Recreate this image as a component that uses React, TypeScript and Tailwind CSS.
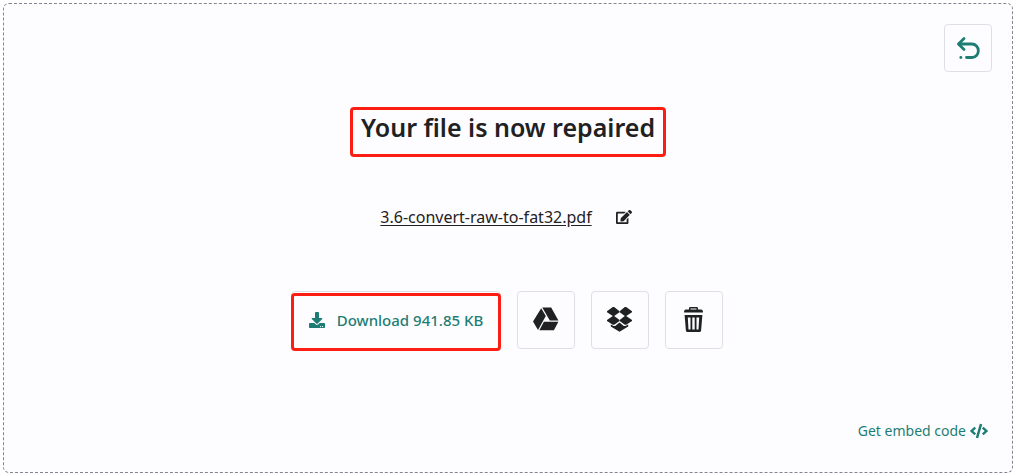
import React from 'react';
import { FaCode, FaDownload, FaEdit } from 'react-icons/fa';

const DriveIcon: React.FC = () => (
  <svg viewBox="0 0 26 26" className="h-[26px] w-[26px]" fill="currentColor" aria-hidden="true">
    <path d="M8.2 1.3 12.8 9 5 23 0 14.6z" />
    <path d="M9.3.6h8.9L25.4 13.4h-8.6z" />
    <path d="M10.9 14.8h14.5l-4.5 8.4H6.4z" />
  </svg>
);

const DropboxIcon: React.FC = () => (
  <svg viewBox="0 0 26 26" className="h-[26px] w-[26px]" fill="currentColor" aria-hidden="true">
    <path d="M5.8 0h1.4l5.3 4.2v1L7.2 9H5.8L0 5.2v-1z" />
    <path d="M17.8 0h1.4L25 4.2v1L19.2 9h-1.4l-5.1-3.8v-1z" />
    <path d="M5.8 9h1.4l5.3 4v1l-5.3 3.7H5.8L0 14v-1z" />
    <path d="M17.8 9h1.4l5.8 4v1l-5.8 3.7h-1.4L12.7 14v-1z" />
    <path d="M3.8 17.4 6.6 19.1 8.2 18.9 12.5 15.4 16.8 18.9 18.4 19.1 21.2 17.4V19.6L12.5 24.8 3.8 19.6z" />
  </svg>
);

const TrashIcon: React.FC = () => (
  <svg viewBox="0 0 20 26" className="h-[26px] w-5" fill="currentColor" aria-hidden="true">
    <path d="M5 2.6V1.2Q5 0 6.2 0h6.6Q14 0 14 1.2v1.4h3Q19 2.6 19 5.4H0Q0 2.6 2 2.6zM6.5 2.6h6V1.5h-6z" fillRule="evenodd" />
    <path d="M.6 8h17.8l-1.3 15.4Q17 25 15.4 25H3.6q-1.6 0-1.7-1.6zM3.8 10.4l.7 12.2h2V10.4zM8.3 10.4v12.2h2.4V10.4zM12.5 10.4v12.2h2l.7-12.2z" fillRule="evenodd" />
  </svg>
);

const UndoIcon: React.FC = () => (
  <svg viewBox="0 0 24 24" className="h-6 w-6" fill="none" stroke="currentColor" strokeWidth="2.8" strokeLinecap="round" strokeLinejoin="round" aria-hidden="true">
    <path d="M8 2.5 2.5 8 8 13.5" />
    <path d="M3 8h13a6.3 6.7 0 0 1 0 13.5H10.5" />
    <path d="M4.8 21.5h.1" />
  </svg>
);

interface FileAction {
  id: string;
  label: string;
  icon: React.ComponentType;
}

const actions: FileAction[] = [
  { id: 'drive', label: 'Save to Google Drive', icon: DriveIcon },
  { id: 'dropbox', label: 'Save to Dropbox', icon: DropboxIcon },
  { id: 'delete', label: 'Delete file', icon: TrashIcon },
];

const App: React.FC = () => {
  return (
    <main className="p-[3px] pr-1 font-['Noto_Sans','Open_Sans',sans-serif] text-[#1f2122]">
      <section className="flex flex-col rounded-md border border-dashed border-[#85858f] bg-[#fdfdff] px-5 pt-5 pb-[31px]">
        <div className="flex justify-end">
          <button type="button" aria-label="Start over" className="flex h-12 w-12 items-center justify-center rounded border border-[#dfdfe6] text-[#1d7d74]">
            <UndoIcon />
          </button>
        </div>

        <div className="mt-[35px] flex flex-col items-center">
          <h1 className="rounded-[4px] border-3 border-[#fc1d13] px-2 pb-2.5 text-[25px] leading-[34px] font-semibold">
            Your file is now repaired
          </h1>

          <div className="mt-12 flex items-center gap-6 pr-1">
            <a href="#file" className="text-base leading-6 underline underline-offset-2">3.6-convert-raw-to-fat32.pdf</a>
            <button type="button" aria-label="Rename file">
              <FaEdit className="h-4 w-4" />
            </button>
          </div>

          <div className="mt-[62px] flex items-center gap-4 pr-0.5">
            <button type="button" className="relative flex h-[58px] items-center gap-3 rounded border border-[#dfdfe6] px-[17px] text-[15px] font-medium text-[#1d7d74]">
              {/* highlight frame over the button */}
              <span className="absolute -inset-x-px top-px -bottom-[3px] rounded-[4px] border-3 border-[#fc1d13]" />
              <FaDownload className="h-4 w-4" />
              Download 941.85 KB
            </button>
            {actions.map((action) => {
              const Icon = action.icon;
              return (
                <button key={action.id} type="button" aria-label={action.label} className="flex h-[58px] w-[58px] items-center justify-center rounded border border-[#dfdfe6]">
                  <Icon />
                </button>
              );
            })}
          </div>
        </div>

        <div className="mt-[72px] flex justify-end pr-1">
          <a href="#embed" className="flex items-center gap-1 text-sm text-[#1d7d74]">
            Get embed code
            <FaCode className="h-[18px] w-[18px]" />
          </a>
        </div>
      </section>
    </main>
  );
};

export default App;
